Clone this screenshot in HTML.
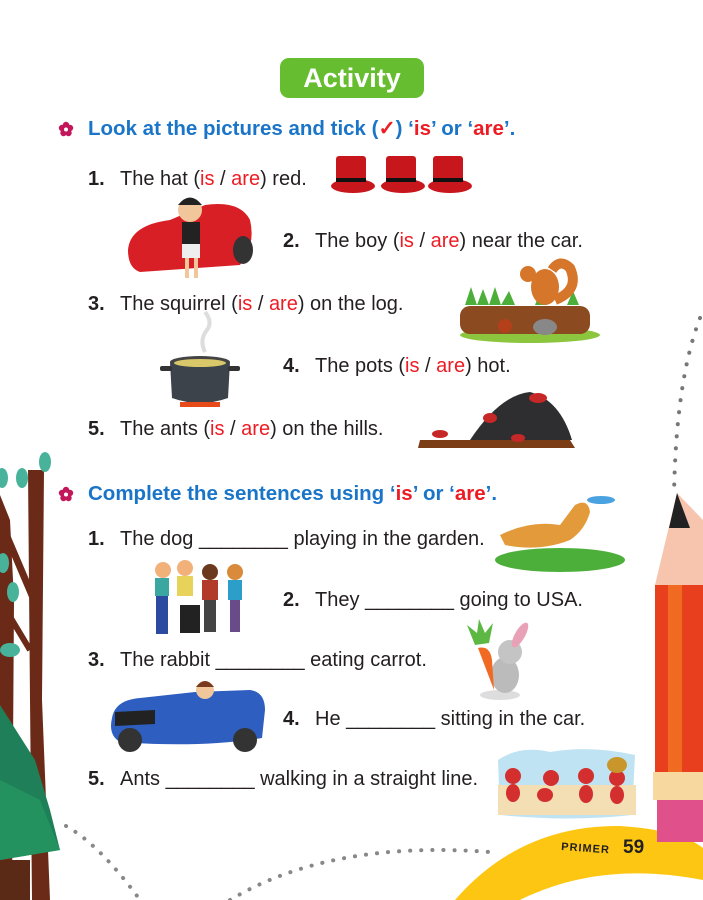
<!DOCTYPE html>
<html><head><meta charset="utf-8"><style>
*{margin:0;padding:0;box-sizing:border-box}
body{width:703px;height:900px;background:#fff;position:relative;overflow:hidden;font-family:"Liberation Sans",sans-serif;color:#231f20}
.t{position:absolute;font-size:20px;white-space:nowrap;line-height:1}
.n{font-weight:bold;display:inline-block;width:32px}
.r{color:#ed1c24}
.h{position:absolute;font-size:20.5px;font-weight:bold;color:#1a75c9;white-space:nowrap;line-height:1}
.fl{position:absolute;width:16px;height:16px}
.ab{position:absolute}
</style></head><body>

<div class="ab" style="left:280px;top:58px;width:144px;height:40px;background:#66bd2f;border-radius:9px;color:#fff;font-weight:bold;font-size:27px;text-align:center;line-height:40px">Activity</div>

<svg class="fl" style="left:58px;top:121px" viewBox="0 0 16 16"><g fill="#c2185b"><circle cx="8" cy="4" r="3.2"/><circle cx="12" cy="7" r="3.2"/><circle cx="10.5" cy="12" r="3.2"/><circle cx="5.5" cy="12" r="3.2"/><circle cx="4" cy="7" r="3.2"/></g><circle cx="8" cy="8.5" r="2" fill="#fff"/></svg>
<div class="h" style="left:88px;top:119px">Look at the pictures and tick (<span class="r">✓</span>) ‘<span class="r">is</span>’ or ‘<span class="r">are</span>’.</div>

<svg class="fl" style="left:58px;top:486px" viewBox="0 0 16 16"><g fill="#c2185b"><circle cx="8" cy="4" r="3.2"/><circle cx="12" cy="7" r="3.2"/><circle cx="10.5" cy="12" r="3.2"/><circle cx="5.5" cy="12" r="3.2"/><circle cx="4" cy="7" r="3.2"/></g><circle cx="8" cy="8.5" r="2" fill="#fff"/></svg>
<div class="h" style="left:88px;top:484px">Complete the sentences using ‘<span class="r">is</span>’ or ‘<span class="r">are</span>’.</div>

<div class="t" style="left:88px;top:169px"><span class="n">1.</span>The hat (<span class="r">is</span> / <span class="r">are</span>) red.</div>
<div class="t" style="left:283px;top:231px"><span class="n">2.</span>The boy (<span class="r">is</span> / <span class="r">are</span>) near the car.</div>
<div class="t" style="left:88px;top:294px"><span class="n">3.</span>The squirrel (<span class="r">is</span> / <span class="r">are</span>) on the log.</div>
<div class="t" style="left:283px;top:356px"><span class="n">4.</span>The pots (<span class="r">is</span> / <span class="r">are</span>) hot.</div>
<div class="t" style="left:88px;top:419px"><span class="n">5.</span>The ants (<span class="r">is</span> / <span class="r">are</span>) on the hills.</div>

<div class="t" style="left:88px;top:529px"><span class="n">1.</span>The dog ________ playing in the garden.</div>
<div class="t" style="left:283px;top:590px"><span class="n">2.</span>They ________ going to USA.</div>
<div class="t" style="left:88px;top:650px"><span class="n">3.</span>The rabbit ________ eating carrot.</div>
<div class="t" style="left:283px;top:709px"><span class="n">4.</span>He ________ sitting in the car.</div>
<div class="t" style="left:88px;top:769px"><span class="n">5.</span>Ants ________ walking in a straight line.</div>

<svg class="ab" style="left:0;top:0" width="703" height="900" viewBox="0 0 703 900">
 <g fill="#c8161d">
  <rect x="336" y="156" width="30" height="28" rx="3"/><ellipse cx="353" cy="186" rx="22" ry="7"/>
  <rect x="386" y="156" width="30" height="28" rx="3"/><ellipse cx="403" cy="186" rx="22" ry="7"/>
  <rect x="433" y="156" width="30" height="28" rx="3"/><ellipse cx="450" cy="186" rx="22" ry="7"/>
 </g>
 <g fill="#111"><rect x="336" y="178" width="30" height="4"/><rect x="386" y="178" width="30" height="4"/><rect x="433" y="178" width="30" height="4"/></g>
 <path d="M128 250 Q130 225 170 220 L205 205 Q240 200 250 220 Q256 245 240 265 L140 272 Q128 268 128 250Z" fill="#d91f26"/>
 <ellipse cx="243" cy="250" rx="10" ry="14" fill="#333"/>
 <circle cx="190" cy="210" r="12" fill="#f1c69b"/><path d="M178 205 Q190 190 202 205Z" fill="#222"/>
 <rect x="182" y="222" width="18" height="22" fill="#222"/><rect x="182" y="244" width="18" height="14" fill="#eee"/>
 <rect x="185" y="258" width="4" height="20" fill="#f1c69b"/><rect x="194" y="258" width="4" height="20" fill="#f1c69b"/>
 <ellipse cx="530" cy="335" rx="70" ry="8" fill="#8cc63f"/>
 <rect x="460" y="306" width="130" height="28" rx="10" fill="#8b4a1f"/>
 <path d="M465 305 l6 -18 l6 18 l6 -16 l6 16 l6 -18 l6 18 l8 -14 l6 14 l20 0 l6 -16 l6 16 l20 0 l6 -14 l6 14Z" fill="#4caf3a"/>
 <ellipse cx="545" cy="287" rx="14" ry="18" fill="#d5762a"/><circle cx="528" cy="274" r="8" fill="#d5762a"/>
 <path d="M555 300 Q580 290 570 268 Q560 258 552 270" fill="none" stroke="#d5762a" stroke-width="10"/>
 <ellipse cx="545" cy="327" rx="12" ry="8" fill="#888"/><circle cx="505" cy="326" r="7" fill="#b3401a"/>
 <path d="M205 352 q-6 -12 2 -22 q6 -8 -2 -18" fill="none" stroke="#ddd" stroke-width="4"/>
 <ellipse cx="200" cy="362" rx="30" ry="6" fill="#444"/>
 <path d="M170 362 L230 362 L228 398 Q200 408 172 398Z" fill="#3c434a"/>
 <ellipse cx="200" cy="363" rx="26" ry="4" fill="#d9c86a"/>
 <rect x="160" y="366" width="12" height="5" rx="2" fill="#333"/><rect x="228" y="366" width="12" height="5" rx="2" fill="#333"/>
 <rect x="180" y="402" width="40" height="5" fill="#e64a19"/>
 <path d="M420 440 L570 440 L575 448 L418 448Z" fill="#7a3d16"/>
 <path d="M470 440 Q500 395 530 392 Q560 400 572 440Z" fill="#2e2e30"/>
 <g fill="#c62828"><ellipse cx="538" cy="398" rx="9" ry="5"/><ellipse cx="490" cy="418" rx="7" ry="5"/><ellipse cx="440" cy="434" rx="8" ry="4"/><ellipse cx="518" cy="438" rx="7" ry="4"/></g>
 <ellipse cx="560" cy="560" rx="65" ry="12" fill="#4caf3a"/>
 <path d="M500 535 Q530 520 560 525 L575 505 Q588 498 590 512 Q585 530 570 540 Q540 552 505 545Z" fill="#e39a3a"/>
 <ellipse cx="601" cy="500" rx="14" ry="4" fill="#4aa3e0"/>
 <g><circle cx="163" cy="570" r="8" fill="#f3b17a"/><rect x="155" y="578" width="14" height="18" fill="#3aa7a0"/><rect x="156" y="596" width="12" height="38" fill="#2b4aa0"/>
 <circle cx="185" cy="568" r="8" fill="#f3b17a"/><rect x="177" y="576" width="16" height="20" fill="#e8d35a"/><rect x="180" y="605" width="20" height="28" fill="#222"/>
 <circle cx="210" cy="572" r="8" fill="#6b3a1e"/><rect x="202" y="580" width="16" height="20" fill="#b23a2a"/><rect x="204" y="600" width="12" height="32" fill="#444"/>
 <circle cx="235" cy="572" r="8" fill="#d98a3a"/><rect x="228" y="580" width="14" height="20" fill="#2b9ec9"/><rect x="230" y="600" width="10" height="32" fill="#6a4b8a"/></g>
 <ellipse cx="500" cy="695" rx="20" ry="5" fill="#ddd"/>
 <ellipse cx="505" cy="675" rx="14" ry="18" fill="#bbb"/><circle cx="510" cy="652" r="12" fill="#c4c4c4"/>
 <ellipse cx="520" cy="635" rx="5" ry="14" fill="#e9a1b8" transform="rotate(30 520 635)"/>
 <path d="M478 648 Q490 645 492 660 L494 690Z" fill="#f06a24"/>
 <path d="M475 645 l-8 -20 l10 8 l2 -14 l6 14 l8 -10 l-4 20Z" fill="#5db843"/>
 <path d="M112 718 Q115 700 140 698 L195 692 L250 690 Q265 692 265 710 L262 738 Q200 748 120 742 Q108 735 112 718Z" fill="#2e5ec0"/>
 <circle cx="130" cy="740" r="12" fill="#333"/><circle cx="245" cy="740" r="12" fill="#333"/>
 <path d="M115 712 l40 -2 0 14 -40 2Z" fill="#222"/>
 <circle cx="205" cy="690" r="9" fill="#f1c69b"/><path d="M196 687 q9 -12 18 0Z" fill="#7a3a20"/>
 <path d="M498 760 Q520 745 550 752 Q590 745 635 755 L632 815 Q570 822 500 815Z" fill="#bfe3f3"/>
 <rect x="498" y="785" width="138" height="30" fill="#f3dfb3"/>
 <g fill="#d32f2f"><circle cx="513" cy="776" r="8"/><ellipse cx="513" cy="793" rx="7" ry="9"/>
 <circle cx="551" cy="778" r="8"/><ellipse cx="545" cy="795" rx="8" ry="7"/>
 <circle cx="586" cy="776" r="8"/><ellipse cx="586" cy="794" rx="7" ry="9"/>
 <circle cx="617" cy="778" r="8"/><ellipse cx="617" cy="795" rx="7" ry="9"/></g>
 <ellipse cx="617" cy="765" rx="10" ry="8" fill="#c8962a"/>

 <path d="M700 318 Q676 380 674 495" fill="none" stroke="#777" stroke-width="4" stroke-dasharray="0.1 12" stroke-linecap="round"/>
 <path d="M66 826 Q100 845 140 900" fill="none" stroke="#888" stroke-width="4" stroke-dasharray="0.1 11" stroke-linecap="round"/>
 <path d="M230 900 Q330 840 490 852" fill="none" stroke="#888" stroke-width="4" stroke-dasharray="0.1 11" stroke-linecap="round"/>

 <path d="M455 900 Q520 825 620 826 Q680 830 703 848 L703 900 L610 900 Q560 878 520 900Z" fill="#fdc613"/>
 <path d="M520 900 Q600 860 703 880 L703 900Z" fill="#fff"/>

 <path d="M677 493 L655 585 L703 585 L703 520Z" fill="#f7c5ad"/>
 <path d="M677 493 L669 528 L690 528Z" fill="#222"/>
 <rect x="655" y="585" width="48" height="190" fill="#e8401e"/>
 <rect x="668" y="585" width="14" height="190" fill="#f06a22"/>
 <rect x="653" y="772" width="50" height="28" fill="#f7d9a0"/>
 <rect x="657" y="800" width="46" height="42" fill="#e0508a"/>

 <path d="M28 470 L44 470 L42 700 L50 900 L32 900 L30 700Z" fill="#6b2a17"/>
 <path d="M0 495 L10 520 L14 600 L12 900 L0 900Z" fill="#6b2a17"/>
 <path d="M0 520 L34 600" stroke="#6b2a17" stroke-width="7"/>
 <path d="M0 600 L30 650" stroke="#6b2a17" stroke-width="6"/>
 <g fill="#48b39a"><ellipse cx="45" cy="462" rx="6" ry="10"/><ellipse cx="22" cy="478" rx="6" ry="10"/><ellipse cx="2" cy="478" rx="6" ry="10"/><ellipse cx="3" cy="563" rx="6" ry="10"/><ellipse cx="13" cy="592" rx="6" ry="10"/><ellipse cx="10" cy="650" rx="10" ry="7"/></g>
 <path d="M0 705 L35 760 L50 810 L60 850 L0 860Z" fill="#1f7f58"/>
 <path d="M0 780 L40 800 L60 850 L0 860Z" fill="#23925f"/>
 <rect x="0" y="860" width="30" height="40" fill="#5b2a17"/>

 <text x="561" y="850" font-family="Liberation Sans" font-weight="bold" font-size="11" fill="#231f20" letter-spacing="1" transform="rotate(4 561 850)">PRIMER</text>
 <text x="623" y="853" font-family="Liberation Sans" font-weight="bold" font-size="19" fill="#231f20">59</text>
</svg>
</body></html>
